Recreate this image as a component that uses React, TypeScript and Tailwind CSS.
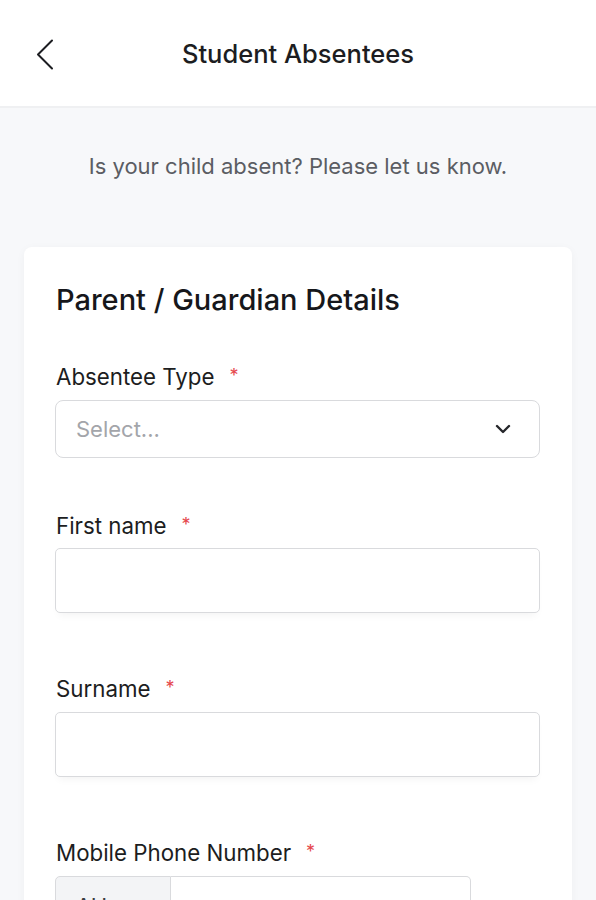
import React from "react";

const font = { fontFamily: "Inter, 'Noto Sans', sans-serif" };

function Label({ text }: { text: string }) {
  return (
    <div className="flex items-start text-[22.3px] leading-[26px] text-[#1c1d21]">
      <span>{text}</span>
      <span className="ml-[15px] mt-[1px] text-[#e5484d] text-[18px] leading-[22px]">*</span>
    </div>
  );
}

export default function App() {
  return (
    <div style={font} className="w-[596px] h-[900px] overflow-hidden bg-[#f7f8fa]">
      <header className="relative h-[108px] bg-white border-b-2 border-[#eff0f2] flex items-center justify-center">
        <svg
          className="absolute left-[36px] top-[39px]"
          width="18"
          height="31"
          viewBox="0 0 18 31"
          fill="none"
          stroke="#1c1d21"
          strokeWidth="2"
          strokeLinecap="round"
          strokeLinejoin="round"
        >
          <path d="M16 1.5 L2 15.5 L16 29.5" />
        </svg>
        <h1 className="text-[25.5px] font-medium text-[#1c1d21] mt-[2px]">Student Absentees</h1>
      </header>

      <p className="pt-[44px] text-center text-[22px] leading-[28px] text-[#5b5d63]">
        Is your child absent? Please let us know.
      </p>

      <div className="mx-[24px] mt-[67px] rounded-[8px] bg-white shadow-[0_2px_10px_rgba(0,0,0,0.04)] px-[32px] pt-[37px] pb-[40px]">
        <h2 className="text-[29px] leading-[32px] font-medium text-[#16171b]">Parent / Guardian Details</h2>

        <div className="mt-[48px]">
          <Label text="Absentee Type" />
          <div className="mt-[10px] h-[58px] rounded-[8px] border border-[#d9dadd] flex items-center justify-between pl-[20px] pr-[28px] -ml-px">
            <span className="text-[22px] text-[#a3a5aa]">Select...</span>
            <svg width="16" height="10" viewBox="0 0 16 10" fill="none" stroke="#26272b" strokeWidth="2.4" strokeLinecap="round" strokeLinejoin="round">
              <path d="M2 2 L8 8 L14 2" />
            </svg>
          </div>
        </div>

        <div className="mt-[55px]">
          <Label text="First name" />
          <div className="mt-[9px] h-[65px] rounded-[5px] border border-[#d9dadd] bg-white -ml-px shadow-[0_6px_8px_-4px_rgba(0,0,0,0.05)]" />
        </div>

        <div className="mt-[63px]">
          <Label text="Surname" />
          <div className="mt-[10px] h-[65px] rounded-[5px] border border-[#d9dadd] bg-white -ml-px shadow-[0_6px_8px_-4px_rgba(0,0,0,0.05)]" />
        </div>

        <div className="mt-[63px]">
          <Label text="Mobile Phone Number" />
          <div className="mt-[10px] flex h-[60px] w-[416px] -ml-px">
            <div className="w-[116px] rounded-l-[5px] border border-[#d9dadd] bg-[#f3f4f6] flex items-center pl-[20px] text-[22px] text-[#3a3b40]">
              AU
            </div>
            <div className="flex-1 rounded-r-[5px] border border-l-0 border-[#d9dadd] bg-white" />
          </div>
        </div>
      </div>
    </div>
  );
}
